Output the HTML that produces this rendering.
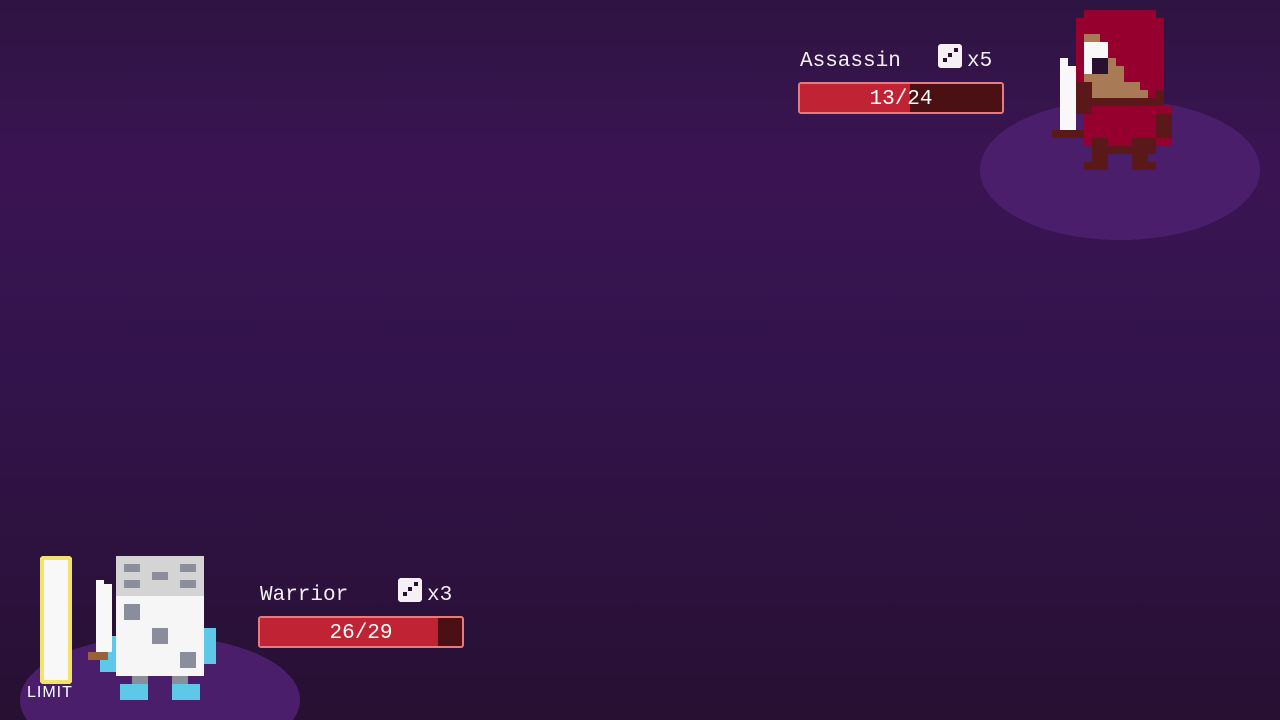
<!DOCTYPE html><html><head><style>
html,body{margin:0;width:1280px;height:720px;overflow:hidden}
body{background:linear-gradient(#2e1442 0px,#3a1452 160px,#32134a 400px,#271032 720px);font-family:"Liberation Mono",monospace;position:relative}
.a{position:absolute}
.t{color:#f4f0f4;font-size:21px}
.bar{position:absolute;height:28px;border:2px solid #e67a7e;border-radius:3px;background:#4a1014;overflow:hidden}
.bar .f{position:absolute;left:0;top:0;bottom:0;background:#c02434}
.bar .n{position:absolute;left:0;right:0;top:4px;text-align:center;color:#fff;font-size:21px}
svg{display:block}
</style></head><body>
<svg class="a" style="left:0;top:0" width="1280" height="720" shape-rendering="crispEdges">
<ellipse cx="1120" cy="170" rx="140" ry="70" fill="#4b1e6b"/>
<ellipse cx="160" cy="700" rx="140" ry="64" fill="#4b1e6b"/>
<!-- assassin -->
<rect x="1084" y="10" width="72" height="8" fill="#95002e"/>
<rect x="1076" y="18" width="88" height="80" fill="#95002e"/>
<rect x="1084" y="106" width="88" height="40" fill="#95002e"/>
<polygon points="1084,34 1100,34 1100,50 1108,50 1108,58 1116,58 1116,66 1124,66 1124,82 1140,82 1140,90 1148,90 1148,98 1092,98 1092,82 1084,82" fill="#a87a56"/>
<rect x="1084" y="42" width="24" height="32" fill="#f8f8f8"/>
<rect x="1092" y="58" width="16" height="16" fill="#2a1030"/>
<rect x="1076" y="82" width="16" height="32" fill="#5a1818"/>
<rect x="1084" y="98" width="80" height="8" fill="#5a1818"/>
<rect x="1156" y="90" width="8" height="8" fill="#5a1818"/>
<rect x="1156" y="114" width="16" height="24" fill="#5a1818"/>
<rect x="1092" y="138" width="64" height="16" fill="#5a1818"/>
<rect x="1108" y="138" width="24" height="8" fill="#95002e"/>
<rect x="1092" y="154" width="16" height="16" fill="#5a1818"/>
<rect x="1132" y="154" width="16" height="16" fill="#5a1818"/>
<rect x="1084" y="162" width="24" height="8" fill="#5a1818"/>
<rect x="1132" y="162" width="24" height="8" fill="#5a1818"/>
<rect x="1060" y="58" width="8" height="8" fill="#f8f8f8"/>
<rect x="1060" y="66" width="16" height="64" fill="#f8f8f8"/>
<rect x="1052" y="130" width="32" height="8" fill="#5a1818"/>
<!-- warrior -->
<rect x="40" y="556" width="32" height="128" rx="3" fill="#f2e36a"/>
<rect x="44" y="560" width="24" height="120" fill="#f8f8f8"/>
<rect x="100" y="636" width="16" height="36" fill="#5ec8e8"/>
<rect x="204" y="628" width="12" height="36" fill="#5ec8e8"/>
<rect x="96" y="580" width="8" height="8" fill="#f8f8f8"/>
<rect x="96" y="584" width="16" height="68" fill="#f8f8f8"/>
<rect x="88" y="652" width="20" height="8" fill="#9a6038"/>
<rect x="116" y="556" width="88" height="40" fill="#d4d4d4"/>
<rect x="116" y="596" width="88" height="80" fill="#f6f6f6"/>
<g fill="#8a8e9a"><rect x="124" y="564" width="16" height="8"/><rect x="180" y="564" width="16" height="8"/><rect x="152" y="572" width="16" height="8"/><rect x="124" y="580" width="16" height="8"/><rect x="180" y="580" width="16" height="8"/><rect x="124" y="604" width="16" height="16"/><rect x="152" y="628" width="16" height="16"/><rect x="180" y="652" width="16" height="16"/><rect x="132" y="676" width="16" height="10"/><rect x="172" y="676" width="16" height="10"/></g>
<rect x="120" y="684" width="28" height="16" fill="#5ec8e8"/>
<rect x="172" y="684" width="28" height="16" fill="#5ec8e8"/>
<!-- dice -->
<rect x="938" y="44" width="24" height="24" rx="3" fill="#f4f0f4"/>
<rect x="943" y="58" width="4" height="4" fill="#2a1030"/><rect x="948" y="53" width="4" height="4" fill="#2a1030"/><rect x="954" y="48" width="4" height="4" fill="#2a1030"/>
<rect x="398" y="578" width="24" height="24" rx="3" fill="#f4f0f4"/>
<rect x="403" y="592" width="4" height="4" fill="#2a1030"/><rect x="408" y="587" width="4" height="4" fill="#2a1030"/><rect x="414" y="582" width="4" height="4" fill="#2a1030"/>
</svg>
<div class="a t" style="left:800px;top:50px">Assassin</div>
<div class="a t" style="left:967px;top:50px">x5</div>
<div class="bar" style="left:798px;top:82px;width:202px"><div class="f" style="width:110px"></div><div class="n">13/24</div></div>
<div class="a t" style="left:260px;top:584px">Warrior</div>
<div class="a t" style="left:427px;top:584px">x3</div>
<div class="bar" style="left:258px;top:616px;width:202px"><div class="f" style="width:178px"></div><div class="n">26/29</div></div>
<div class="a" style="left:27px;top:684px;color:#fff;font-family:'Liberation Sans',sans-serif;font-size:16px;letter-spacing:1px">LIMIT</div>
</body></html>
